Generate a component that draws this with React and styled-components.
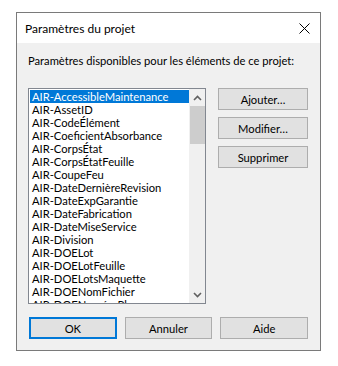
import styled, { createGlobalStyle } from "styled-components"

const Global = createGlobalStyle`
  body {
    margin: 0;
    background: #ffffff;
    font-family: Lato, "Liberation Sans", sans-serif;
    font-size: 11.2px;
    color: #000;
  }
`

const Window = styled.div`
  margin: 12px 0 0 16px;
  width: 303px;
  border: 1px solid #7a7a7a;
  display: flex;
  flex-direction: column;
`

const TitleBar = styled.div`
  height: 30px;
  background: #ffffff;
  display: flex;
  align-items: center;
  justify-content: space-between;
  padding: 0 10px 0 8px;
`

const Title = styled.span`
  font-size: 12px;
`

const Body = styled.div`
  background: #f0f0f0;
  padding: 10px 12px 11px 11px;
  display: flex;
  flex-direction: column;
`

const Caption = styled.div`
  line-height: 16px;
  white-space: nowrap;
  margin-bottom: 19px;
`

const Main = styled.div`
  display: flex;
  gap: 12px;
`

const ListBox = styled.div`
  width: 177px;
  height: 214px;
  border: 1px solid #828790;
  background: #ffffff;
  display: flex;
`

const Items = styled.div`
  flex: 1;
  overflow: hidden;
  padding: 1px 0 0 1px;
`

const Item = styled.div`
  height: 13px;
  line-height: 13px;
  padding-left: 2px;
  white-space: nowrap;
  overflow: hidden;
  background: ${(p) => (p.$selected ? "#0078d7" : "transparent")};
  color: ${(p) => (p.$selected ? "#ffffff" : "#000000")};
`

const ScrollBar = styled.div`
  width: 16px;
  background: #f0f0f0;
  display: flex;
  flex-direction: column;
`

const Arrow = styled.div`
  height: 17px;
  display: flex;
  align-items: center;
  justify-content: center;
`

const Track = styled.div`
  flex: 1;
  display: flex;
  flex-direction: column;
`

const Thumb = styled.div`
  height: 38px;
  margin: 0 0 0 1px;
  background: #cdcdcd;
`

const Side = styled.div`
  display: flex;
  flex-direction: column;
  gap: 7px;
`

const Button = styled.button`
  width: ${(p) => p.$w || 90}px;
  height: 22px;
  padding: 0;
  font-family: inherit;
  font-size: 11.2px;
  color: #000;
  background: #e1e1e1;
  border: ${(p) => (p.$default ? "2px solid #0078d7" : "1px solid #adadad")};
`

const Footer = styled.div`
  display: flex;
  gap: 8px;
  margin: 13px 0 0 1px;
`

const items = [
  "AIR-AccessibleMaintenance",
  "AIR-AssetID",
  "AIR-CodeÉlément",
  "AIR-CoeficientAbsorbance",
  "AIR-CorpsÉtat",
  "AIR-CorpsÉtatFeuille",
  "AIR-CoupeFeu",
  "AIR-DateDernièreRevision",
  "AIR-DateExpGarantie",
  "AIR-DateFabrication",
  "AIR-DateMiseService",
  "AIR-Division",
  "AIR-DOELot",
  "AIR-DOELotFeuille",
  "AIR-DOELotsMaquette",
  "AIR-DOENomFichier",
  "AIR-DOENuméroPlan",
]

function Chevron({ down }) {
  return (
    <svg width="9" height="6" viewBox="0 0 9 6">
      <path
        d={down ? "M1 1 L4.5 4.5 L8 1" : "M1 5 L4.5 1.5 L8 5"}
        fill="none"
        stroke="#606060"
        strokeWidth="1.6"
      />
    </svg>
  )
}

export default function App() {
  return (
    <>
      <Global />
      <Window>
        <TitleBar>
          <Title>Paramètres du projet</Title>
          <svg width="11" height="11" viewBox="0 0 11 11">
            <path d="M0.5 0.5 L10.5 10.5 M10.5 0.5 L0.5 10.5" stroke="#000" strokeWidth="1" />
          </svg>
        </TitleBar>
        <Body>
          <Caption>Paramètres disponibles pour les éléments de ce projet:</Caption>
          <Main>
            <ListBox>
              <Items>
                {items.map((it, i) => (
                  <Item key={it} $selected={i === 0}>{it}</Item>
                ))}
              </Items>
              <ScrollBar>
                <Arrow><Chevron /></Arrow>
                <Track><Thumb /></Track>
                <Arrow><Chevron down /></Arrow>
              </ScrollBar>
            </ListBox>
            <Side>
              <Button>Ajouter…</Button>
              <Button>Modifier…</Button>
              <Button>Supprimer</Button>
            </Side>
          </Main>
          <Footer>
            <Button $w={88} $default>OK</Button>
            <Button $w={88}>Annuler</Button>
            <Button $w={88}>Aide</Button>
          </Footer>
        </Body>
      </Window>
    </>
  )
}
